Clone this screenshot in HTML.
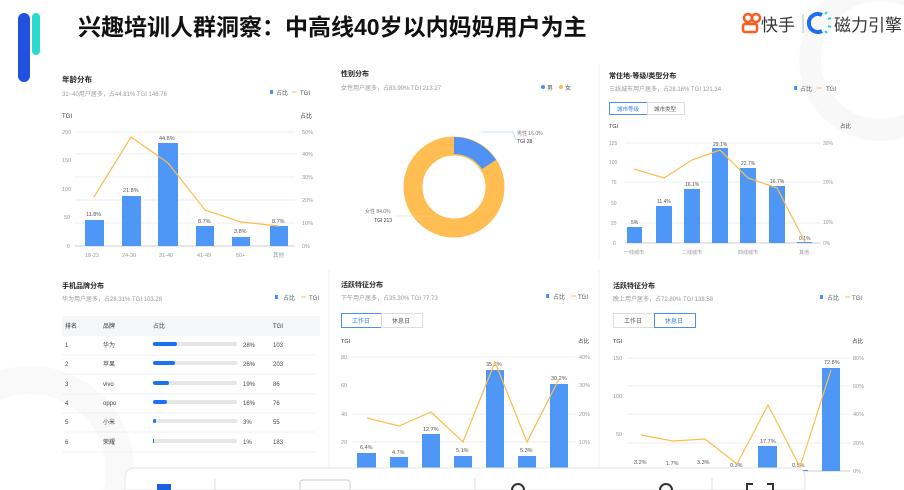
<!DOCTYPE html>
<html><head><meta charset="utf-8"><style>
html,body{margin:0;width:904px;height:490px;overflow:hidden;background:#fff;font-family:"Liberation Sans","Noto Sans CJK SC",sans-serif;}
svg{display:block;overflow:hidden}
svg text{font-family:"Liberation Sans","Noto Sans CJK SC",sans-serif;}
</style></head><body>
<svg width="904" height="490" viewBox="0 0 904 490" xmlns="http://www.w3.org/2000/svg">
<!-- watermark -->
<circle cx="880" cy="60" r="70" fill="none" stroke="#f8f8f8" stroke-width="22"/>
<circle cx="30" cy="470" r="90" fill="none" stroke="#f9f9f9" stroke-width="28"/>
<!-- header bars -->
<rect x="18" y="13" width="12" height="69" rx="6" fill="#2251e0"/>
<rect x="32" y="13" width="8" height="42" rx="4" fill="#2bd9cf"/>
<text x="78" y="35" font-size="23" font-weight="bold" fill="#111">兴趣培训人群洞察：中高线40岁以内妈妈用户为主</text>
<!-- logos -->
<circle cx="748" cy="18" r="4" fill="none" stroke="#ff5a1f" stroke-width="2.5"/>
<circle cx="756" cy="18" r="4" fill="none" stroke="#ff5a1f" stroke-width="2.5"/>
<rect x="743" y="24" width="14" height="8" rx="2" fill="none" stroke="#ff5a1f" stroke-width="2.5"/>
<text x="761" y="31" font-size="17" fill="#333">快手</text>
<line x1="803" y1="14" x2="803" y2="33" stroke="#bbb"/>
<path d="M822 15 A9 9 0 1 0 822 31" fill="none" stroke="#1e6cf0" stroke-width="4"/>
<path d="M825 14 l2 -2 M828 19 l3 -1 M828 26 l3 1 M825 31 l2 2" stroke="#2bd9cf" stroke-width="2"/>
<text x="834" y="31" font-size="17" fill="#333">磁力引擎</text>

<!-- panel 1 -->
<text x="62" y="82" font-size="7.5" font-weight="bold" fill="#222">年龄分布</text>
<text x="62" y="96" font-size="6" fill="#999">31~40用户居多，占44.81% TGI 146.76</text>
<rect x="270" y="90" width="3" height="4" fill="#4a8ff5"/><text x="276" y="95" font-size="6" fill="#555">占比</text>
<line x1="292" y1="92" x2="297" y2="92" stroke="#fbbd4c"/><text x="300" y="95" font-size="6" fill="#555">TGI</text>
<text x="62" y="118" font-size="6" fill="#333">TGI</text><text x="300" y="118" font-size="6" fill="#333">占比</text>
<g stroke="#eee"><line x1="75" y1="132" x2="295" y2="132"/><line x1="75" y1="154" x2="295" y2="154"/><line x1="75" y1="177" x2="295" y2="177"/><line x1="75" y1="200" x2="295" y2="200"/><line x1="75" y1="223" x2="295" y2="223"/><line x1="75" y1="246" x2="295" y2="246" stroke="#ccc"/></g>
<g font-size="5.5" fill="#999"><text x="62" y="134">200</text><text x="62" y="162">150</text><text x="62" y="191">100</text><text x="64" y="219">50</text><text x="67" y="248">0</text>
<text x="302" y="134">50%</text><text x="302" y="156">40%</text><text x="302" y="179">30%</text><text x="302" y="202">20%</text><text x="302" y="225">10%</text><text x="302" y="248">0%</text>
<text x="85" y="257">18-23</text><text x="122" y="257">24-30</text><text x="159" y="257">31-40</text><text x="197" y="257">41-49</text><text x="236" y="257">50+</text><text x="273" y="257">其他</text></g>
<g fill="#4f97f7"><rect x="85" y="220" width="19" height="26"/><rect x="122" y="196" width="19" height="50"/><rect x="158" y="143" width="20" height="103"/><rect x="196" y="226" width="18" height="20"/><rect x="232" y="237" width="18" height="9"/><rect x="270" y="226" width="18" height="20"/></g>
<g font-size="5.5" fill="#555"><text x="86" y="216">11.8%</text><text x="123" y="192">21.8%</text><text x="159" y="140">44.8%</text><text x="198" y="223">8.7%</text><text x="234" y="233">3.8%</text><text x="272" y="223">8.7%</text></g>
<polyline points="94,197 131,137 168,163 205,210 241,222 279,226" fill="none" stroke="#fbbd4c" stroke-width="1.2"/>

<!-- panel 2 -->
<text x="341" y="76" font-size="7" font-weight="bold" fill="#222">性别分布</text>
<text x="341" y="90" font-size="6" fill="#999">女性用户居多，占83.99% TGI 213.27</text>
<circle cx="543" cy="87" r="2" fill="#4a8ff5"/><text x="547" y="90" font-size="6" fill="#555">男</text>
<circle cx="561" cy="87" r="2" fill="#fbbd4c"/><text x="565" y="90" font-size="6" fill="#555">女</text>
<circle cx="454" cy="187" r="41" fill="none" stroke="#ffbd52" stroke-width="19"/>
<path d="M454 137 A50 50 0 0 1 496 160 L482 169 A33 33 0 0 0 454 154 Z" fill="#4f91f5"/>
<polyline points="482,132 513,132 516,140" fill="none" stroke="#9bc0f7" stroke-width="0.6"/>
<text x="517" y="135" font-size="5" fill="#777">男性 16.0%</text><text x="517" y="143" font-size="5" fill="#333">TGI 28</text>
<line x1="394" y1="216" x2="432" y2="216" stroke="#ffd590" stroke-width="0.6"/>
<text x="365" y="213" font-size="5" fill="#777">女性 84.0%</text><text x="374" y="222" font-size="5" fill="#333">TGI 213</text>

<!-- panel 3 -->
<rect x="598" y="63" width="2" height="196" fill="#f7f7f7"/>
<text x="609" y="78" font-size="7" font-weight="bold" fill="#222">常住地-等级/类型分布</text>
<text x="609" y="91" font-size="6" fill="#999">三线城市用户居多，占28.16% TGI 121.34</text>
<rect x="794" y="86" width="3" height="4" fill="#4a8ff5"/><text x="800" y="91" font-size="6" fill="#555">占比</text>
<line x1="817" y1="88" x2="822" y2="88" stroke="#fbbd4c"/><text x="826" y="91" font-size="6" fill="#555">TGI</text>
<rect x="609.5" y="102.5" width="38" height="12" fill="#fff" stroke="#4a8ff5"/><text x="617" y="111" font-size="5.5" fill="#3a7ff0">城市等级</text>
<rect x="647.5" y="102.5" width="37" height="12" fill="#fff" stroke="#ddd"/><text x="654" y="111" font-size="5.5" fill="#555">城市类型</text>
<text x="609" y="128" font-size="5.5" fill="#333">TGI</text><text x="840" y="128" font-size="5.5" fill="#333">占比</text>
<g stroke="#eee"><line x1="625" y1="143" x2="820" y2="143"/><line x1="625" y1="182" x2="820" y2="182"/><line x1="625" y1="223" x2="820" y2="223"/><line x1="625" y1="243" x2="820" y2="243" stroke="#ccc"/></g>
<g font-size="5" fill="#999"><text x="609" y="145">125</text><text x="609" y="164">100</text><text x="611" y="184">75</text><text x="611" y="205">50</text><text x="611" y="225">25</text><text x="613" y="245">0</text>
<text x="823" y="145">30%</text><text x="823" y="184">20%</text><text x="823" y="224">10%</text><text x="823" y="245">0%</text>
<text x="624" y="254">一线城市</text><text x="682" y="254">二线城市</text><text x="738" y="254">四线城市</text><text x="799" y="254">其他</text></g>
<g fill="#4f97f7"><rect x="627" y="227" width="15" height="16"/><rect x="656" y="206" width="16" height="37"/><rect x="684" y="189" width="16" height="54"/><rect x="712" y="148" width="16" height="95"/><rect x="740" y="168" width="16" height="75"/><rect x="769" y="186" width="16" height="57"/><rect x="797" y="242" width="15" height="1"/></g>
<g font-size="5" fill="#555"><text x="631" y="224">5%</text><text x="657" y="203">11.4%</text><text x="685" y="186">16.1%</text><text x="713" y="146">29.1%</text><text x="741" y="165">22.7%</text><text x="770" y="183">16.7%</text><text x="799" y="240">0.1%</text></g>
<polyline points="634,169 664,178 692,160 720,150 748,178 777,188 805,242" fill="none" stroke="#fbbd4c" stroke-width="1.2"/>

<!-- panel 4 -->
<rect x="328" y="270" width="2" height="220" fill="#f7f7f7"/>
<text x="62" y="288" font-size="7" font-weight="bold" fill="#222">手机品牌分布</text>
<text x="62" y="301" font-size="6" fill="#999">华为用户居多，占28.31% TGI 103.28</text>
<rect x="275" y="295" width="3" height="4" fill="#4a8ff5"/><text x="283" y="300" font-size="6" fill="#555">占比</text>
<line x1="301" y1="297" x2="306" y2="297" stroke="#fbbd4c"/><text x="309" y="300" font-size="6" fill="#555">TGI</text>
<rect x="62" y="316" width="258" height="20" fill="#f5f6f7"/>
<g font-size="6" fill="#333"><text x="65" y="328">排名</text><text x="103" y="328">品牌</text><text x="153" y="328">占比</text><text x="273" y="328">TGI</text></g>
<g stroke="#f0f0f0"><line x1="62" y1="355" x2="315" y2="355"/><line x1="62" y1="374" x2="315" y2="374"/><line x1="62" y1="394" x2="315" y2="394"/><line x1="62" y1="413" x2="315" y2="413"/><line x1="62" y1="432" x2="315" y2="432"/><line x1="62" y1="452" x2="315" y2="452"/></g>
<g font-size="6" fill="#444">
<text x="65" y="347">1</text><text x="103" y="347">华为</text><text x="243" y="347">28%</text><text x="273" y="347">103</text>
<text x="65" y="366">2</text><text x="103" y="366">苹果</text><text x="243" y="366">26%</text><text x="273" y="366">203</text>
<text x="65" y="386">3</text><text x="103" y="386">vivo</text><text x="243" y="386">19%</text><text x="273" y="386">86</text>
<text x="65" y="405">4</text><text x="103" y="405">oppo</text><text x="243" y="405">16%</text><text x="273" y="405">76</text>
<text x="65" y="424">5</text><text x="103" y="424">小米</text><text x="243" y="424">3%</text><text x="273" y="424">55</text>
<text x="65" y="444">6</text><text x="103" y="444">荣耀</text><text x="243" y="444">1%</text><text x="273" y="444">183</text></g>
<g fill="#e6e6e6"><rect x="153" y="342" width="84" height="4" rx="2"/><rect x="153" y="361" width="84" height="4" rx="2"/><rect x="153" y="381" width="84" height="4" rx="2"/><rect x="153" y="400" width="84" height="4" rx="2"/><rect x="153" y="419" width="84" height="4" rx="2"/><rect x="153" y="439" width="84" height="4" rx="2"/></g>
<g fill="#1a73f5"><rect x="153" y="342" width="24" height="4" rx="2"/><rect x="153" y="361" width="22" height="4" rx="2"/><rect x="153" y="381" width="16" height="4" rx="2"/><rect x="153" y="400" width="14" height="4" rx="2"/><rect x="153" y="419" width="3" height="4" rx="1.5"/><rect x="153" y="439" width="1" height="4"/></g>

<!-- panel 5 -->
<text x="341" y="287" font-size="7" font-weight="bold" fill="#222">活跃特征分布</text>
<text x="341" y="300" font-size="6" fill="#999">下午用户居多，占35.30% TGI 77.73</text>
<rect x="546" y="294" width="3" height="4" fill="#4a8ff5"/><text x="553" y="299" font-size="6" fill="#555">占比</text>
<line x1="571" y1="296" x2="576" y2="296" stroke="#fbbd4c"/><text x="578" y="299" font-size="6" fill="#555">TGI</text>
<rect x="341.5" y="313.5" width="40" height="14" fill="#fff" stroke="#4a8ff5"/><text x="352" y="323" font-size="6" fill="#3a7ff0">工作日</text>
<rect x="381.5" y="313.5" width="41" height="14" fill="#fff" stroke="#ddd"/><text x="392" y="323" font-size="6" fill="#555">休息日</text>
<text x="341" y="343" font-size="5.5" fill="#333">TGI</text><text x="578" y="343" font-size="5.5" fill="#333">占比</text>
<g stroke="#eee"><line x1="352" y1="357" x2="575" y2="357"/><line x1="352" y1="414" x2="575" y2="414"/><line x1="352" y1="442" x2="575" y2="442"/></g>
<g font-size="5.5" fill="#999"><text x="341" y="359">80</text><text x="341" y="387">60</text><text x="341" y="416">40</text><text x="341" y="444">20</text>
<text x="579" y="359">40%</text><text x="579" y="387">30%</text><text x="579" y="416">20%</text><text x="579" y="444">10%</text></g>
<g fill="#4f97f7"><rect x="357" y="453" width="19" height="20"/><rect x="390" y="457" width="18" height="16"/><rect x="422" y="434" width="18" height="39"/><rect x="454" y="456" width="18" height="17"/><rect x="486" y="370" width="18" height="103"/><rect x="518" y="456" width="18" height="17"/><rect x="550" y="384" width="18" height="89"/></g>
<g font-size="5.5" fill="#555"><text x="360" y="449">6.4%</text><text x="392" y="454">4.7%</text><text x="423" y="431">12.7%</text><text x="456" y="452">5.1%</text><text x="486" y="366">35.3%</text><text x="520" y="452">5.3%</text><text x="551" y="380">30.2%</text></g>
<polyline points="367,418 399,426 431,412 463,442 495,362 527,442 559,379" fill="none" stroke="#fbbd4c" stroke-width="1.2"/>

<!-- panel 6 -->
<rect x="598" y="270" width="2" height="220" fill="#f7f7f7"/>
<text x="613" y="288" font-size="7" font-weight="bold" fill="#222">活跃特征分布</text>
<text x="613" y="301" font-size="6" fill="#999">晚上用户居多，占72.80% TGI 138.58</text>
<rect x="820" y="295" width="3" height="4" fill="#4a8ff5"/><text x="827" y="300" font-size="6" fill="#555">占比</text>
<line x1="845" y1="297" x2="850" y2="297" stroke="#fbbd4c"/><text x="852" y="300" font-size="6" fill="#555">TGI</text>
<rect x="613.5" y="313.5" width="41" height="14" fill="#fff" stroke="#ddd"/><text x="624" y="323" font-size="6" fill="#555">工作日</text>
<rect x="654.5" y="313.5" width="41" height="14" fill="#fff" stroke="#4a8ff5"/><text x="665" y="323" font-size="6" fill="#3a7ff0">休息日</text>
<text x="613" y="343" font-size="5.5" fill="#333">TGI</text><text x="852" y="343" font-size="5.5" fill="#333">占比</text>
<g stroke="#eee"><line x1="626" y1="358" x2="850" y2="358"/><line x1="626" y1="386" x2="850" y2="386"/><line x1="626" y1="414" x2="850" y2="414"/><line x1="626" y1="443" x2="850" y2="443"/><line x1="626" y1="471" x2="850" y2="471" stroke="#ccc"/></g>
<g font-size="5.5" fill="#999"><text x="613" y="360">150</text><text x="613" y="398">100</text><text x="616" y="436">50</text>
<text x="853" y="360">80%</text><text x="853" y="388">60%</text><text x="853" y="416">40%</text><text x="853" y="445">20%</text><text x="853" y="473">0%</text></g>
<g fill="#4f97f7"><rect x="631" y="468" width="21" height="3"/><rect x="664" y="469" width="19" height="2"/><rect x="695" y="468" width="18" height="3"/><rect x="758" y="446" width="19" height="25"/><rect x="790" y="470" width="18" height="1"/><rect x="822" y="368" width="18" height="103"/></g>
<g font-size="5.5" fill="#555"><text x="634" y="464">3.2%</text><text x="666" y="465">1.7%</text><text x="697" y="464">3.3%</text><text x="730" y="467">0.3%</text><text x="760" y="443">17.7%</text><text x="792" y="467">0.5%</text><text x="824" y="364">72.8%</text></g>
<polyline points="641,435 673,441 705,439 737,464 768,405 800,467 831,370" fill="none" stroke="#fbbd4c" stroke-width="1.2"/>

<!-- bottom toolbar -->
<path d="M125 490 V478 Q125 468 135 468 H795 Q805 468 805 478 V490 Z" fill="#fff" stroke="#e6e6e6"/>
<rect x="157" y="484" width="14" height="6" fill="#1a5fe0"/>
<line x1="215" y1="478" x2="215" y2="490" stroke="#ddd"/>
<path d="M300 490 V483 Q300 480 303 480 H347 Q350 480 350 483 V490" fill="none" stroke="#ccc"/>
<line x1="475" y1="478" x2="475" y2="490" stroke="#ddd"/>
<path d="M512 490 A6 6 0 0 1 524 490" fill="none" stroke="#333" stroke-width="2"/>
<path d="M660 490 A6 6 0 0 1 672 490" fill="none" stroke="#333" stroke-width="2"/>
<line x1="712" y1="478" x2="712" y2="490" stroke="#ddd"/>
<path d="M747 490 v-6 h6 M773 490 v-6 h-6" fill="none" stroke="#333" stroke-width="2"/>
</svg>
</body></html>
